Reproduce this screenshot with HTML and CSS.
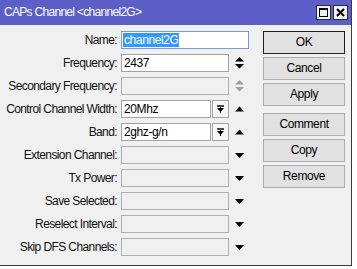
FILE: index.html
```html
<!DOCTYPE html>
<html>
<head>
	<title>CAPs Channel</title>
	<link rel="stylesheet" href="styles.css">
</head>
<body>
	<!-- Dialog window with its title bar, form rows and action buttons. -->
	<div class="window">
		<div class="titlebar">
			<span class="title">CAPs Channel &lt;channel2G&gt;</span>
			<span class="tbtn">
				<svg width="11" height="11" viewBox="0 0 11 11"><rect x="1.5" y="1.5" width="8" height="8" fill="none" stroke="#000" stroke-width="1"/><line x1="1" y1="2" x2="10" y2="2" stroke="#000" stroke-width="2"/></svg>
			</span>
			<span class="tbtn">
				<svg width="11" height="11" viewBox="0 0 11 11"><path d="M2 2 L9 9 M9 2 L2 9" stroke="#000" stroke-width="2"/></svg>
			</span>
		</div>

		<div class="content">
			<form class="fields">
				<div class="row">
					<label>Name:</label>
					<div class="input wide"><span class="sel">channel2G</span></div>
				</div>
				<div class="row">
					<label>Frequency:</label>
					<div class="input">2437</div>
					<svg class="icon" width="11" height="12" viewBox="0 0 11 12"><path d="M5.5 0 L10 4.5 L1 4.5 Z M1 7 L10 7 L5.5 11.5 Z" fill="#000"/></svg>
				</div>
				<div class="row">
					<label>Secondary Frequency:</label>
					<div class="input off"></div>
					<svg class="icon" width="11" height="12" viewBox="0 0 11 12"><path d="M5.5 0 L10 4.5 L1 4.5 Z M1 7 L10 7 L5.5 11.5 Z" fill="#a0a0a0"/></svg>
				</div>
				<div class="row">
					<label>Control Channel Width:</label>
					<div class="combo">
						<div class="input">20Mhz</div>
						<div class="drop"><svg width="9" height="9" viewBox="0 0 9 9"><path d="M1 1 L8 1" stroke="#000" stroke-width="1.4"/><path d="M1 3 L8 3 L4.5 7 Z" fill="#000"/><path d="M4.5 2 L4.5 8" stroke="#000" stroke-width="1"/></svg></div>
					</div>
					<svg class="icon" width="11" height="7" viewBox="0 0 11 7"><path d="M5.5 0.5 L10 5.5 L1 5.5 Z" fill="#000"/></svg>
				</div>
				<div class="row">
					<label>Band:</label>
					<div class="combo">
						<div class="input">2ghz-g/n</div>
						<div class="drop"><svg width="9" height="9" viewBox="0 0 9 9"><path d="M1 1 L8 1" stroke="#000" stroke-width="1.4"/><path d="M1 3 L8 3 L4.5 7 Z" fill="#000"/><path d="M4.5 2 L4.5 8" stroke="#000" stroke-width="1"/></svg></div>
					</div>
					<svg class="icon" width="11" height="7" viewBox="0 0 11 7"><path d="M5.5 0.5 L10 5.5 L1 5.5 Z" fill="#000"/></svg>
				</div>
				<div class="row">
					<label>Extension Channel:</label>
					<div class="input off"></div>
					<svg class="icon" width="11" height="7" viewBox="0 0 11 7"><path d="M1 1 L10 1 L5.5 6 Z" fill="#000"/></svg>
				</div>
				<div class="row">
					<label>Tx Power:</label>
					<div class="input off"></div>
					<svg class="icon" width="11" height="7" viewBox="0 0 11 7"><path d="M1 1 L10 1 L5.5 6 Z" fill="#000"/></svg>
				</div>
				<div class="row">
					<label>Save Selected:</label>
					<div class="input off"></div>
					<svg class="icon" width="11" height="7" viewBox="0 0 11 7"><path d="M1 1 L10 1 L5.5 6 Z" fill="#000"/></svg>
				</div>
				<div class="row">
					<label>Reselect Interval:</label>
					<div class="input off"></div>
					<svg class="icon" width="11" height="7" viewBox="0 0 11 7"><path d="M1 1 L10 1 L5.5 6 Z" fill="#000"/></svg>
				</div>
				<div class="row">
					<label>Skip DFS Channels:</label>
					<div class="input off"></div>
					<svg class="icon" width="11" height="7" viewBox="0 0 11 7"><path d="M1 1 L10 1 L5.5 6 Z" fill="#000"/></svg>
				</div>
			</form>

			<div class="buttons">
				<div class="btn default">OK</div>
				<div class="btn">Cancel</div>
				<div class="btn">Apply</div>
				<div class="btn spaced">Comment</div>
				<div class="btn">Copy</div>
				<div class="btn">Remove</div>
			</div>
		</div>
	</div>
</body>
</html>
```
FILE: styles.css
```css
/*
	Page behind the dialog is plain white.
*/
body {
	margin: 0;
	background: #ffffff;
	font-family: "Liberation Sans", Arial, sans-serif;
	font-size: 12px;
	letter-spacing: -0.4px;
	color: #000;
}

.window {
	width: 351px;
	height: 265px;
	background: #f0f0f0;
	border-right: 1px solid #3a3a3a;
	border-bottom: 1px solid #3a3a3a;
	display: flex;
	flex-direction: column;
}

.titlebar {
	height: 25px;
	background: #5b5fc7;
	display: flex;
	align-items: center;
	padding: 0 3px 0 4px;
	gap: 2px;
}

.title {
	flex: 1;
	color: #fff;
	font-size: 12px;
	letter-spacing: -0.7px;
	padding-bottom: 1px;
}

.tbtn {
	width: 13px;
	height: 13px;
	background: #f0f0f0;
	border: 1px solid #2b2b2b;
	display: flex;
	align-items: center;
	justify-content: center;
}

.content {
	display: flex;
	padding-top: 6px;
}

/*
	Each form row: label, field, trailing arrow.
*/
.fields {
	display: flex;
	flex-direction: column;
	gap: 5px;
	margin: 0;
	width: 263px;
}

.row {
	display: grid;
	grid-template-columns: 117px 108px 11px;
	column-gap: 4px;
	align-items: center;
	height: 18px;
}

label {
	text-align: right;
	white-space: nowrap;
	letter-spacing: -0.6px;
	color: #111;
}

.input {
	box-sizing: border-box;
	height: 18px;
	border: 1px solid #a2a2a2;
	background: #fff;
	padding: 0 2px;
	line-height: 16px;
	white-space: nowrap;
	overflow: hidden;
}

.input.off {
	background: #f0f0f0;
	border-color: #b0b0b0;
}

.input.wide {
	width: 128px;
	grid-column: 2 / 4;
	padding-left: 1px;
	border-color: #7a9cd3;
}

.sel {
	background: #3399ff;
	color: #fff;
	padding: 0 1px;
}

.combo {
	display: flex;
	gap: 1px;
}

.combo .input {
	width: 91px;
}

.drop {
	box-sizing: border-box;
	width: 17px;
	height: 18px;
	border: 1px solid #a2a2a2;
	background: #f6f6f6;
	display: flex;
	align-items: center;
	justify-content: center;
}

.icon {
	justify-self: center;
	margin-left: 1px;
}

/*
	Dialog buttons on the right-hand side.
*/
.buttons {
	display: flex;
	flex-direction: column;
	gap: 3px;
	width: 82px;
}

.btn {
	box-sizing: border-box;
	height: 23px;
	border: 1px solid #adadad;
	background: #e1e1e1;
	text-align: center;
	line-height: 21px;
}

.btn.default {
	border: 1px solid #1e1e1e;
	height: 23px;
}

.btn.spaced {
	margin-top: 4px;
}
```
